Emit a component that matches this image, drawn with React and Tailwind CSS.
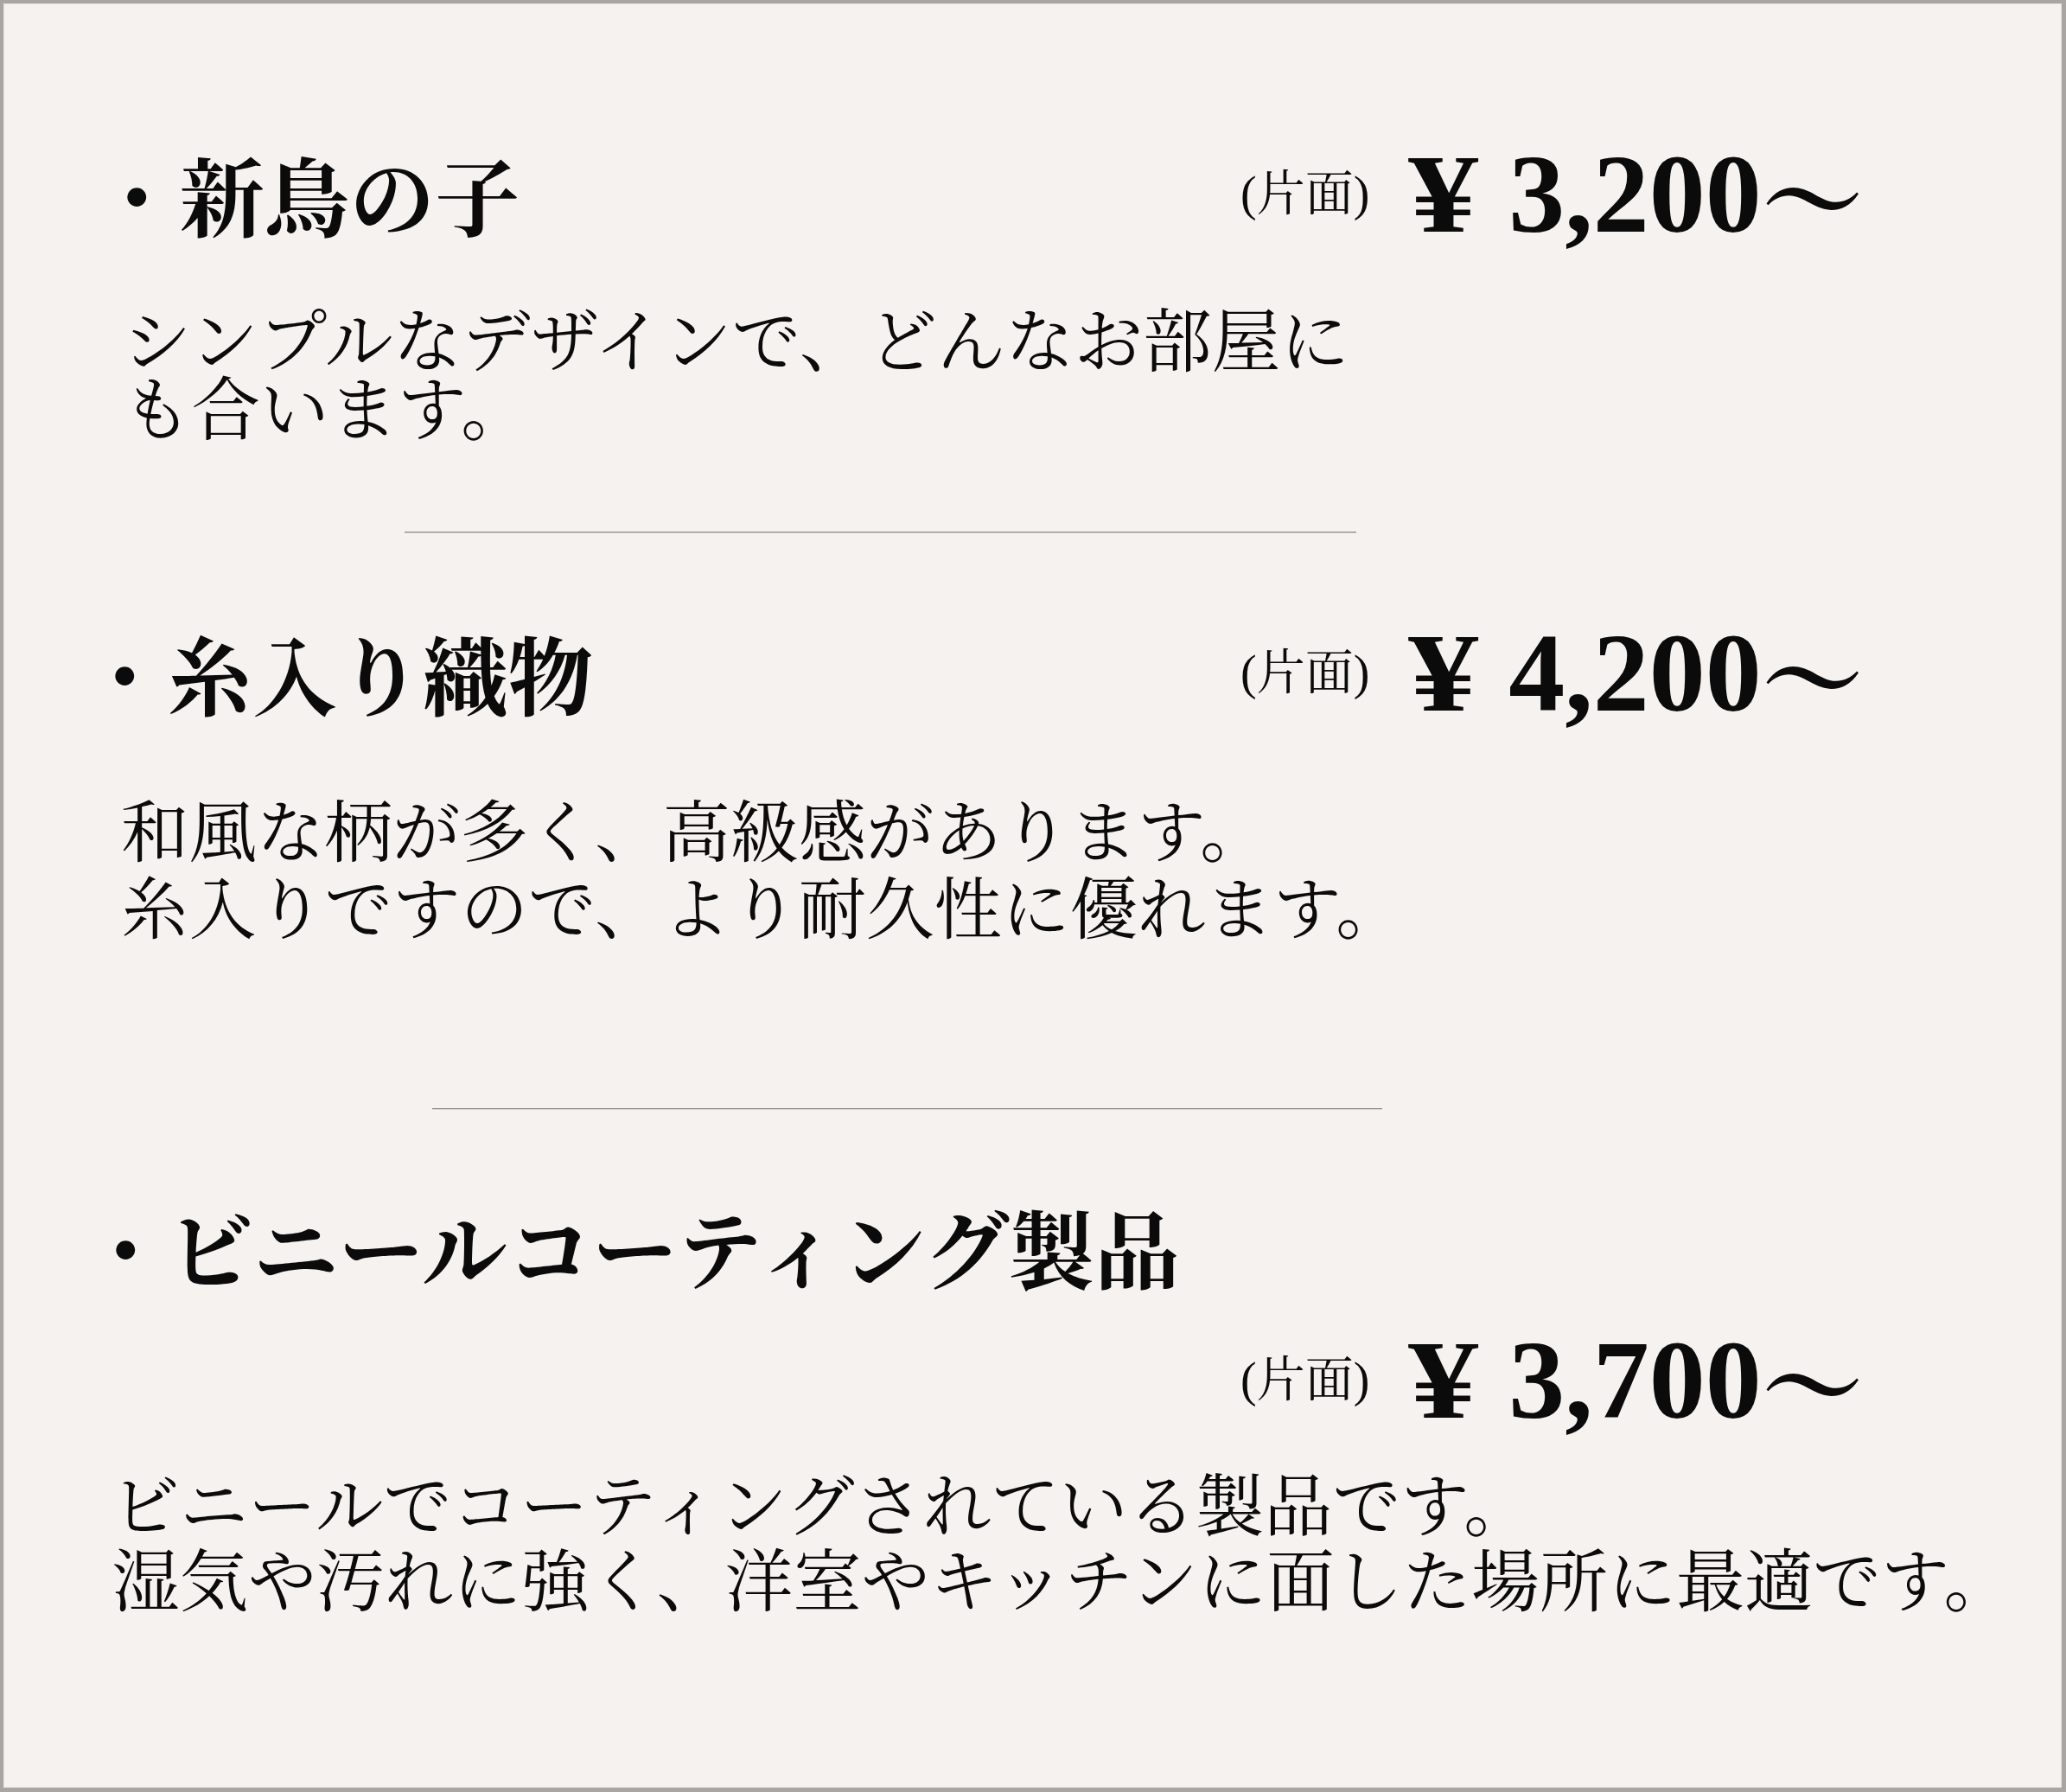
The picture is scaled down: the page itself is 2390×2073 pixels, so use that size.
import React from "react";

function Price({ amount }) {
  return (
    <div className="flex items-center shrink-0 text-[#0b0b0b]">
      <span className="text-[56px] leading-none font-['Liberation_Serif','Noto_Serif_CJK_JP','Noto_Sans_CJK_JP',serif]">(片面)</span>
      <span className="ml-[53px] flex items-center text-[130px] leading-none font-bold font-['Liberation_Serif','Noto_Serif_CJK_JP','Noto_Sans_CJK_JP',serif]">
        <span className="inline-block scale-x-125">¥</span>
        <span className="ml-[43px]">{amount}</span>
        <span className="text-[118px] font-['Noto_Serif_CJK_JP','Noto_Sans_CJK_JP',serif]">〜</span>
      </span>
    </div>
  );
}

const jp = "font-['Noto_Serif_CJK_JP','Noto_Sans_CJK_JP',sans-serif]";

export default function App() {
  return (
    <div className="w-[2390px] h-[2073px] box-border overflow-hidden bg-[#f6f2ef] border-solid border-[#a9a5a2] border-t-4 border-l-4 border-r-[5px] border-b-[5px]">
      <div className="h-full box-border border border-[#e7e3e0] text-[#0b0b0b]">
        {/* Section 1 */}
        <div className="pt-[155px] pl-[104px] flex items-center h-[283px] box-border">
          <div className={`w-[1326px] shrink-0 text-[98.5px] leading-[96px] font-bold ${jp}`}>・新鳥の子</div>
          <Price amount="3,200" />
        </div>
        <div className={`mt-[61px] pl-[137px] text-[79.5px] leading-[79px] ${jp}`}>
          シンプルなデザインで、どんなお部屋に
          <br />
          も合います。
        </div>
        <div className="mt-[108px] ml-[463px] w-[1101px]">
          <div className="h-px bg-[#85817e]" />
          <div className="h-px bg-[#dcd8d4]" />
        </div>

        {/* Section 2 */}
        <div className="mt-[97px] pl-[90px] flex items-center h-[128px]">
          <div className={`w-[1340px] shrink-0 text-[98.5px] leading-[96px] font-bold ${jp}`}>・糸入り織物</div>
          <Price amount="4,200" />
        </div>
        <div className={`mt-[71px] pl-[135px] text-[78.5px] leading-[89px] ${jp}`}>
          和風な柄が多く、高級感があります。
          <br />
          糸入りですので、より耐久性に優れます。
        </div>
        <div className="mt-[191px] ml-[495px] w-[1099px]">
          <div className="h-px bg-[#85817e]" />
          <div className="h-px bg-[#dcd8d4]" />
        </div>

        {/* Section 3 */}
        <div className={`mt-[110px] pl-[91px] text-[98.5px] leading-[96px] font-bold ${jp}`}>・ビニールコーティング製品</div>
        <div className="mt-[42px] pl-[1430px] flex items-center h-[128px]">
          <Price amount="3,700" />
        </div>
        <div className={`mt-[34px] pl-[124px] text-[79px] leading-[87px] ${jp}`}>
          ビニールでコーティングされている製品です。
          <br />
          湿気や汚れに強く、洋室やキッチンに面した場所に最適です。
        </div>
      </div>
    </div>
  );
}
